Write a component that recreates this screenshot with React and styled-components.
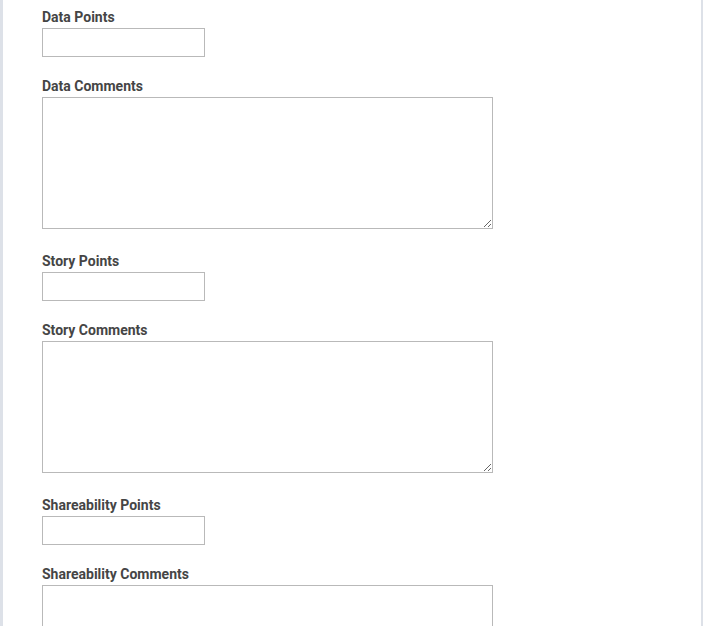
import React from "react";
import styled, { createGlobalStyle } from "styled-components";

const GlobalStyle = createGlobalStyle`
  html, body {
    margin: 0;
    padding: 0;
    background: #ffffff;
  }
`;

const fields = [
  { label: "Data Points", kind: "points" },
  { label: "Data Comments", kind: "comments" },
  { label: "Story Points", kind: "points" },
  { label: "Story Comments", kind: "comments" },
  { label: "Shareability Points", kind: "points" },
  { label: "Shareability Comments", kind: "comments" },
];

const App = () => {
  return (
    <>
      <GlobalStyle />
      <Page>
        <Form>
          {fields.map((f) => (
            <Field key={f.label}>
              <Label>{f.label}</Label>
              {f.kind === "points" ? <PointsInput type="text" /> : <CommentsArea />}
            </Field>
          ))}
        </Form>
      </Page>
    </>
  );
};

const Page = styled.div`
  box-sizing: border-box;
  height: 626px;
  overflow: hidden;
  border-left: 3px solid #dde1e8;
  border-right: 2px solid #dde1e8;
  padding: 9px 0 0 39px;
  font-family: Roboto, "Liberation Sans", sans-serif;
`;

const Form = styled.form`
  display: flex;
  flex-direction: column;
`;

const Field = styled.div`
  margin-bottom: 21px;
`;

const Label = styled.label`
  display: block;
  font-size: 14px;
  line-height: 17px;
  font-weight: 700;
  color: #454545;
  margin-bottom: 2px;
`;

const PointsInput = styled.input`
  box-sizing: border-box;
  display: block;
  width: 163px;
  height: 29px;
  margin: 0;
  padding: 4px 6px;
  border: 1px solid #b9b9b9;
  border-radius: 0;
  background: #fff;
  font: 14px Roboto, "Liberation Sans", sans-serif;
  outline: none;
`;

const CommentsArea = styled.textarea`
  box-sizing: border-box;
  display: block;
  width: 451px;
  height: 132px;
  margin: 0 0 3px;
  padding: 4px 6px;
  border: 1px solid #b9b9b9;
  border-radius: 0;
  background: #fff;
  font: 14px Roboto, "Liberation Sans", sans-serif;
  outline: none;
`;

export default App;
